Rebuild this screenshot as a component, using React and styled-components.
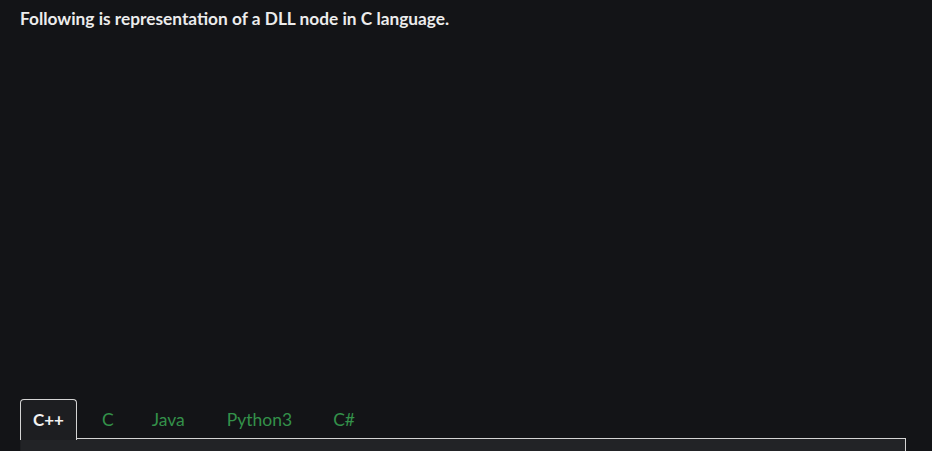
import React, { useState } from "react";
import styled, { createGlobalStyle } from "styled-components";

const Global = createGlobalStyle`
  html, body { margin: 0; padding: 0; background: #131417; }
  body { font-family: Lato, "Noto Sans", sans-serif; }
`;

const Page = styled.div`
  width: 932px;
  height: 451px;
  overflow: hidden;
  background: #131417;
  padding: 9px 20px 0 20px;
  box-sizing: border-box;
  display: flex;
  flex-direction: column;
`;

const Title = styled.p`
  margin: 0;
  color: #ececec;
  font-size: 17.3px;
  font-weight: 700;
  line-height: 20px;
`;

const Spacer = styled.div`
  flex: 1;
`;

const TabWrap = styled.div`
  width: 886px;
  display: flex;
  flex-direction: column;
`;

const TabBar = styled.div`
  display: flex;
  align-items: stretch;
  height: 40px;
`;

const ActiveTab = styled.button`
  all: unset;
  cursor: pointer;
  box-sizing: border-box;
  height: 41px;
  padding: 0 12px 1px;
  display: flex;
  align-items: center;
  font-family: Lato, "Noto Sans", sans-serif;
  font-size: 17px;
  font-weight: 700;
  color: #f2f2f2;
  background: #1d1e21;
  border: 1px solid #d4d4d4;
  border-bottom: none;
  border-radius: 4px 4px 0 0;
  position: relative;
  z-index: 1;
`;

const Tab = styled.button`
  all: unset;
  cursor: pointer;
  box-sizing: border-box;
  height: 40px;
  padding: 1px ${(p) => p.$r}px 0 ${(p) => p.$l}px;
  display: flex;
  align-items: center;
  font-family: Lato, "Noto Sans", sans-serif;
  font-size: 17.5px;
  font-weight: 400;
  color: #33914a;
  border-bottom: 1px solid #d4d4d4;
`;

const TabFill = styled.div`
  flex: 1;
  box-sizing: border-box;
  border-bottom: 1px solid #d4d4d4;
`;

const Panel = styled.div`
  height: 12px;
  background: #222326;
  border-left: 1px solid #1d1e21;
  border-right: 1px solid #d4d4d4;
`;

const tabs = [
  { name: "C", l: 25, r: 19 },
  { name: "Java", l: 19, r: 21 },
  { name: "Python3", l: 21, r: 20 },
  { name: "C#", l: 21, r: 20 },
];

export default function App() {
  const [active, setActive] = useState("C++");
  return (
    <>
      <Global />
      <Page>
        <Title>Following is representation of a DLL node in C language.</Title>
        <Spacer />
        <TabWrap>
          <TabBar>
            <ActiveTab onClick={() => setActive("C++")}>C++</ActiveTab>
            {tabs.map((t) => (
              <Tab key={t.name} $l={t.l} $r={t.r} onClick={() => setActive(t.name)}>
                {t.name}
              </Tab>
            ))}
            <TabFill />
          </TabBar>
          <Panel />
        </TabWrap>
      </Page>
    </>
  );
}
